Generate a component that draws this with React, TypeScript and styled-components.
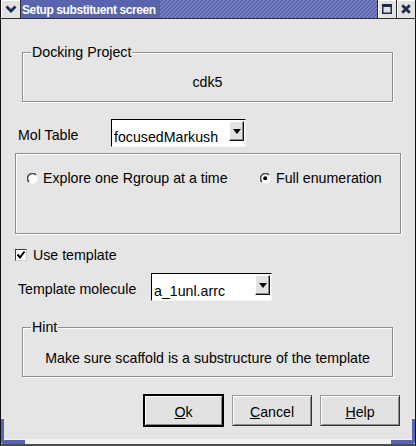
import styled, { createGlobalStyle } from "styled-components";

const GlobalStyle = createGlobalStyle`
  html, body {
    margin: 0;
    padding: 0;
    background: #e5e5e5;
  }
  body {
    font-family: "Liberation Sans", Arial, sans-serif;
    font-size: 14.2px;
    color: #000;
  }
  * {
    box-sizing: border-box;
  }
`;

const FRAME_BLUE = "#5a65b0";

const Window = styled.div`
  position: relative;
  width: 416px;
  height: 446px;
  display: flex;
  flex-direction: column;
  background: #e5e5e5;
  border-left: 1px solid #111;
  border-right: 1px solid #111;
  border-bottom: 2px solid #4c4c4c;
  overflow: hidden;

  &::before,
  &::after {
    content: "";
    position: absolute;
    bottom: 0;
    width: 21px;
    height: 21px;
    border-bottom: 4px solid ${FRAME_BLUE};
  }
  &::before {
    left: 0;
    border-left: 3px solid ${FRAME_BLUE};
    border-bottom-left-radius: 3px;
  }
  &::after {
    right: 0;
    border-right: 3px solid ${FRAME_BLUE};
    border-bottom-right-radius: 3px;
  }
`;

const TitleBar = styled.div`
  display: flex;
  height: 19px;
  border-bottom: 1px solid #2e2e2e;
`;

const MenuButton = styled.div`
  width: 20px;
  display: flex;
  align-items: center;
  justify-content: center;
  background: #e2e2e2;
  border-right: 1px solid #2e2e2e;
  box-shadow: inset 1px 1px 0 #fff;
`;

const Title = styled.div`
  flex: 1;
  padding: 1px 0 0 1px;
  line-height: 18px;
  overflow: hidden;
  white-space: nowrap;
  color: #fff;
  font-weight: bold;
  font-size: 12px;
  letter-spacing: -0.4px;
  background:
    linear-gradient(to right, #5964ac 0, #5964ac 139px, transparent 139px),
    repeating-linear-gradient(135deg, #5964ac 0, #5964ac 1.5px, #7a84c4 1.5px, #7a84c4 2.83px);
`;

const FrameButton = styled.div`
  width: 19px;
  display: flex;
  align-items: center;
  justify-content: center;
  background: #e2e2e2;
  border-left: 1px solid #2e2e2e;
  box-shadow: inset 1px 1px 0 #fff;
`;

const Body = styled.div`
  flex: 1;
  display: flex;
  flex-direction: column;
`;

const BottomEdge = styled.div`
  height: 5px;
  background: #f3f3f3;
`;

const Group = styled.div<{ $top: number; $left: number; $width: number; $height: number; $pad?: number }>`
  position: relative;
  margin: ${(p) => p.$top}px 0 0 ${(p) => p.$left}px;
  width: ${(p) => p.$width}px;
  height: ${(p) => p.$height}px;
  padding-top: ${(p) => p.$pad ?? 0}px;
  border: 1px solid #8e8e8e;
  box-shadow: 1px 1px 0 #fff, inset 1px 1px 0 #fff;
`;

const GroupTitle = styled.span`
  position: absolute;
  top: -9px;
  left: 8px;
  padding: 0 1px;
  line-height: 16px;
  background: #e5e5e5;
`;

const CenterText = styled.div`
  text-align: center;
  line-height: 16px;
`;

const FieldRow = styled.div<{ $top: number }>`
  display: flex;
  align-items: flex-start;
  margin: ${(p) => p.$top}px 0 0 17px;
`;

const FieldLabel = styled.div<{ $width: number }>`
  width: ${(p) => p.$width}px;
  padding-top: 8px;
  line-height: 16px;
  white-space: nowrap;
`;

const Combo = styled.div<{ $width: number }>`
  display: flex;
  align-items: flex-start;
  width: ${(p) => p.$width}px;
  height: 28px;
  padding: 1px 1px 0 0;
  background: #fff;
  border-top: 1px solid #000;
  border-left: 1px solid #000;
  border-right: 1px solid #f4f4f4;
  border-bottom: 1px solid #f4f4f4;
`;

const ComboText = styled.div`
  flex: 1;
  padding: 8px 0 0 2px;
  line-height: 16px;
  white-space: nowrap;
  overflow: hidden;
`;

const ComboArrow = styled.div`
  width: 15px;
  height: 20px;
  display: flex;
  align-items: center;
  justify-content: center;
  background: #e2e2e2;
  border-top: 1px solid #fff;
  border-left: 1px solid #fff;
  border-right: 1px solid #111;
  border-bottom: 1px solid #111;
  box-shadow: inset -1px -1px 0 #8a8a8a;
`;

const RadioRow = styled.div`
  display: grid;
  grid-template-columns: 233px auto;
  padding-left: 11px;
`;

const RadioOption = styled.label`
  display: flex;
  align-items: center;
  gap: 5px;
  line-height: 16px;
  white-space: nowrap;
`;

const CheckRow = styled.label`
  display: flex;
  align-items: center;
  gap: 6px;
  margin: 13px 0 0 14px;
  line-height: 16px;
`;

const CheckBox = styled.span`
  width: 12px;
  height: 12px;
  display: flex;
  align-items: center;
  justify-content: center;
  background: #fff;
  border: 1px solid;
  border-color: #3c3c3c #d0d0d0 #d0d0d0 #3c3c3c;
`;

const ButtonRow = styled.div`
  display: flex;
  justify-content: flex-end;
  align-items: center;
  gap: 8px;
  margin-top: 17px;
  padding-right: 15px;
  height: 33px;
`;

const Button = styled.button<{ $default?: boolean }>`
  width: ${(p) => (p.$default ? 81 : 80)}px;
  height: ${(p) => (p.$default ? 33 : 31)}px;
  padding: 2px 0 0;
  font: inherit;
  color: #000;
  background: #e2e2e2;
  border: ${(p) => (p.$default ? "2px solid #000" : "1px solid")};
  border-color: ${(p) => (p.$default ? "#000" : "#9a9a9a #333 #333 #9a9a9a")};
  box-shadow: inset 1px 1px 0 #fff, inset -1px -1px 0 #8a8a8a;
  line-height: 16px;
`;

const Chevron = () => (
  <svg width="12" height="8" viewBox="0 0 12 8">
    <polyline points="1.5,1.5 6,6 10.5,1.5" fill="none" stroke="#1f2a4f" strokeWidth="2.8" />
  </svg>
);

const MaximizeIcon = () => (
  <svg width="10" height="10" viewBox="0 0 10 10">
    <rect x="0.75" y="0.75" width="8.5" height="8.5" fill="none" stroke="#1f2a4f" strokeWidth="1.5" />
    <rect x="0" y="0" width="10" height="3" fill="#1f2a4f" />
  </svg>
);

const CloseIcon = () => (
  <svg width="10" height="10" viewBox="0 0 10 10">
    <path d="M1.2 1.2 L8.8 8.8 M8.8 1.2 L1.2 8.8" stroke="#1f2a4f" strokeWidth="2.8" />
  </svg>
);

const DownArrow = () => (
  <svg width="8" height="5" viewBox="0 0 8 5">
    <polygon points="0,0 8,0 4,5" fill="#000" />
  </svg>
);

const RadioMark = ({ checked }: { checked?: boolean }) => (
  <svg width="11" height="11" viewBox="0 0 11 11">
    <circle cx="5.5" cy="5.5" r="5" fill="#fff" />
    <path d="M1.96 9.04 A5 5 0 0 1 9.04 1.96" fill="none" stroke="#4a4a4a" strokeWidth="1.6" />
    <path d="M9.04 1.96 A5 5 0 0 1 1.96 9.04" fill="none" stroke="#f4f4f4" strokeWidth="1" />
    {checked && <circle cx="5.2" cy="5.2" r="2" fill="#000" />}
  </svg>
);

const CheckMark = () => (
  <svg width="10" height="10" viewBox="0 0 10 10">
    <polyline points="1.5,4.5 4,7.5 8.5,1.5" fill="none" stroke="#000" strokeWidth="2" />
  </svg>
);

const ComboBox = ({ value, width }: { value: string; width: number }) => (
  <Combo $width={width}>
    <ComboText>{value}</ComboText>
    <ComboArrow>
      <DownArrow />
    </ComboArrow>
  </Combo>
);

export default function App() {
  return (
    <>
      <GlobalStyle />
      <Window>
        <TitleBar>
          <MenuButton>
            <Chevron />
          </MenuButton>
          <Title>Setup substituent screen</Title>
          <FrameButton>
            <MaximizeIcon />
          </FrameButton>
          <FrameButton>
            <CloseIcon />
          </FrameButton>
        </TitleBar>

        <Body>
          <Group $top={33} $left={21} $width={371} $height={50} $pad={21}>
            <GroupTitle>Docking Project</GroupTitle>
            <CenterText>cdk5</CenterText>
          </Group>

          <FieldRow $top={17}>
            <FieldLabel $width={93}>Mol Table</FieldLabel>
            <ComboBox value="focusedMarkush" width={135} />
          </FieldRow>

          <Group $top={6} $left={14} $width={386} $height={81} $pad={16}>
            <RadioRow>
              <RadioOption>
                <RadioMark />
                Explore one Rgroup at a time
              </RadioOption>
              <RadioOption>
                <RadioMark checked />
                Full enumeration
              </RadioOption>
            </RadioRow>
          </Group>

          <CheckRow>
            <CheckBox>
              <CheckMark />
            </CheckBox>
            Use template
          </CheckRow>

          <FieldRow $top={10}>
            <FieldLabel $width={133}>Template molecule</FieldLabel>
            <ComboBox value="a_1unl.arrc" width={121} />
          </FieldRow>

          <Group $top={26} $left={21} $width={371} $height={50} $pad={22}>
            <GroupTitle>Hint</GroupTitle>
            <CenterText>Make sure scaffold is a substructure of the template</CenterText>
          </Group>

          <ButtonRow>
            <Button $default>
              <u>O</u>k
            </Button>
            <Button>
              <u>C</u>ancel
            </Button>
            <Button>
              <u>H</u>elp
            </Button>
          </ButtonRow>
        </Body>
        <BottomEdge />
      </Window>
    </>
  );
}
